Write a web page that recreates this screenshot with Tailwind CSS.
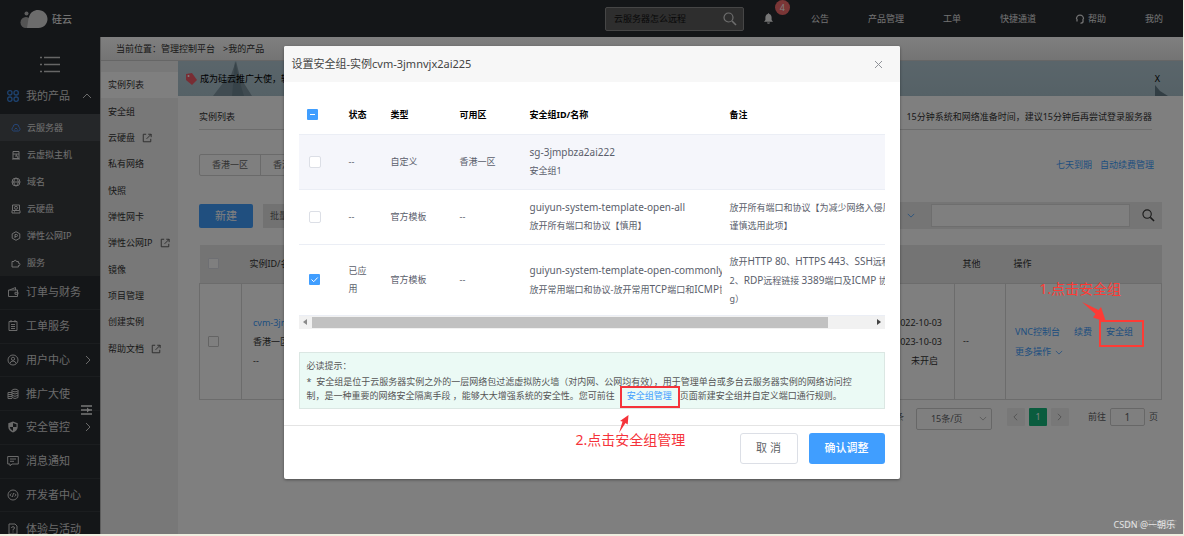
<!DOCTYPE html>
<html lang="zh-CN">
<head>
<meta charset="utf-8">
<title>硅云 - 我的产品</title>
<script src="https://cdn.jsdelivr.net/npm/@tailwindcss/browser@4"></script>
</head>
<body class="h-screen overflow-hidden bg-[#eeeee0] pr-px pb-[2px] font-['Noto_Sans','Noto_Sans_CJK_SC',sans-serif] text-[9px] leading-[18px] text-[#333]">
<svg class="hidden">
  <symbol id="ext" viewBox="0 0 12 12"><path d="M5 1.500H1.500v9h9V7M7.500 1.500h3.500v3.500M11 1.500L5.500 7" fill="none" stroke="currentColor" stroke-width="1.100"/></symbol>
  <symbol id="right" viewBox="0 0 6 10"><path d="M1 1l4 4-4 4" fill="none" stroke="currentColor"/></symbol>
  <symbol id="down" viewBox="0 0 10 6"><path d="M1 1l4 4 4-4" fill="none" stroke="currentColor"/></symbol>
  <symbol id="search" viewBox="0 0 14 14"><circle cx="5.500" cy="5.500" r="4.500" fill="none" stroke="currentColor" stroke-width="1.200"/><path d="M9 9l4 4" stroke="currentColor" stroke-width="1.600"/></symbol>
</svg>
<div class="relative flex h-full flex-col overflow-hidden bg-white">
  <header class="flex h-[37px] shrink-0 items-center bg-[#292c31] text-[#e4e4e4]">
    <a href="#" class="ml-5 flex items-center gap-1 text-[10px] font-medium">
      <svg class="h-5 w-7" viewBox="0 0 28 20"><circle cx="6" cy="13.500" r="5.500" fill="#a9a9a9"/><circle cx="6.500" cy="4.500" r="2" fill="#bbb"/><path d="M7 19c1-5 1-8 2-11C10.500 3 14 1 18 1c5.500 0 9.500 4 9.500 9s-4 9-9 9z" fill="#d9d9d9"/></svg>
      硅云
    </a>
    <form class="ml-auto flex h-6 w-[139px] items-center rounded-[2px] border border-[#8c8c8c] bg-[#5c5c5c] pr-[6px] pl-2">
      <input aria-label="搜索" value="云服务器怎么远程" class="w-full min-w-0 text-[9px] text-[#111] outline-none">
      <button type="button" aria-label="搜索"><svg class="size-[14px] text-[#ddd]"><use href="#search"/></svg></button>
    </form>
    <button class="relative ml-5" aria-label="通知">
      <svg class="h-[11px] w-[9px]" viewBox="0 0 9 11"><path d="M4.500 0l.8 1C7 1.500 7.600 3 7.600 4.500V7L9 8.800H0L1.400 7V4.500C1.400 3 2 1.500 3.700 1zM3 9.400h3a1.500 1.300 0 01-3 0z" fill="#eee"/></svg>
      <span class="absolute -top-[13px] left-[11px] size-[15px] rounded-full bg-[#f56c6c] text-center text-[9px] leading-[15px] text-white">4</span>
    </button>
    <nav class="mr-5 ml-[38px] flex gap-[39px]">
      <a href="#">公告</a><a href="#">产品管理</a><a href="#">工单</a><a href="#">快捷通道</a>
      <a href="#" class="flex items-center gap-[3px]"><svg class="size-[10px]" viewBox="0 0 10 10"><path d="M2 7.500V5M8 7.500V5M1.500 5a3.500 3.800 0 017 0M8.300 7.500Q8 9 5.500 9.300" fill="none" stroke="currentColor" stroke-width="1.300"/></svg>帮助</a>
      <a href="#">我的</a>
    </nav>
  </header>

  <div class="flex min-h-0 flex-1">
    <aside class="relative w-[100px] shrink-0 overflow-hidden bg-[#292c31] text-[11px] text-[#d4d4d4]">
      <button class="mx-auto mt-[19px] block h-[17px] w-5" aria-label="折叠菜单"><svg viewBox="0 0 20 17"><path d="M4 1.500h16M4 8.500h16M4 15.500h16M0 1.500h2M0 8.500h2M0 15.500h2" stroke="#ccc" stroke-width="1.400"/></svg></button>
      <a href="#" class="mt-1 flex h-[37px] items-center pr-2 pl-[7px]">
        <svg class="mr-[7px] size-3" viewBox="0 0 12 12" fill="none" stroke="#3a86e0" stroke-width="1.300"><rect x=".7" y=".7" width="4.300" height="4.300" rx="2"/><rect x="7" y=".7" width="4.300" height="4.300" rx="2"/><rect x=".7" y="7" width="4.300" height="4.300" rx="2"/><rect x="7" y="7" width="4.300" height="4.300" rx="2"/></svg>
        我的产品
        <svg class="ml-auto h-[6px] w-[10px] rotate-180"><use href="#down"/></svg>
      </a>
      <nav class="bg-[#393c3f] text-[9px] text-[#e0e0e0] *:flex *:h-[27px] *:items-center *:gap-[6px] *:pl-[11px]">
        <a href="#" class="bg-[#4b4e52]"><svg class="size-[10px] text-[#4a8cf0]" viewBox="0 0 10 10" fill="none" stroke="currentColor"><path d="M2.500 8A2 2 0 012 4.300a3 3 0 016 0A2 2 0 017.500 8zM3.500 6.500L5 5l1.500 1.500"/></svg>云服务器</a>
        <a href="#"><svg class="size-[10px]" viewBox="0 0 10 10" fill="none" stroke="currentColor"><path d="M2 1.500h6v2.500H2zM2 4v4.500h6V4M4 6h2M1 9h8M5 4l2 4"/></svg>云虚拟主机</a>
        <a href="#"><svg class="size-[10px]" viewBox="0 0 10 10" fill="none" stroke="currentColor"><circle cx="5" cy="5" r="4"/><path d="M1 5h8M5 1c-3 3-3 5 0 8 3-3 3-5 0-8"/></svg>域名</a>
        <a href="#"><svg class="size-[10px]" viewBox="0 0 10 10" fill="none" stroke="currentColor"><path d="M1.500 1h7v5.500h-7zM1 6.500v2.500h8V6.500M3 7.800h1"/><circle cx="5" cy="3.800" r="1.500"/></svg>云硬盘</a>
        <a href="#"><svg class="size-[10px]" viewBox="0 0 10 10" fill="none" stroke="currentColor"><path d="M5 .7l3.800 2.100v4.400L5 9.300 1.200 7.200V2.800zM4 7V3.500h1.500a1 1 0 010 2H4"/></svg>弹性公网IP</a>
        <a href="#"><svg class="size-[10px]" viewBox="0 0 10 10" fill="none" stroke="currentColor"><path d="M1 3.500h2a1.200 1.200 0 112.400 0h2v1.700a1.200 1.200 0 110 2.300V9H1z"/></svg>服务</a>
      </nav>
      <nav class="grid h-[270px] grid-rows-8 *:flex *:items-center *:gap-[7px] *:border-b *:border-[#363a3e] *:pr-[9px] *:pl-[7px]">
        <a href="#"><svg class="size-[12px]" viewBox="0 0 12 12" fill="none" stroke="currentColor"><path d="M2.500 4L8.500 1.500V4M1.500 4h9v6.500h-9zM8 6.300h3v2H8z"/></svg>订单与财务</a>
        <a href="#"><svg class="size-[12px]" viewBox="0 0 12 12" fill="none" stroke="currentColor"><path d="M2 1.500h8v9H2zM4 0v2.500M8 0v2.500M4 4.500h4M4 6.500h4M4 8.500h4"/></svg>工单服务</a>
        <a href="#"><svg class="size-[12px]" viewBox="0 0 12 12" fill="none" stroke="currentColor"><circle cx="6" cy="6" r="5"/><circle cx="6" cy="4.800" r="1.600"/><path d="M3 9.500Q3.500 7 6 7t3 2.500"/></svg>用户中心<svg class="ml-auto h-[10px] w-[6px]"><use href="#right"/></svg></a>
        <a href="#"><svg class="size-[12px]" viewBox="0 0 12 12" fill="none" stroke="currentColor"><ellipse cx="8" cy="2.500" rx="3" ry="1.300"/><path d="M5 2.500v7q3 2 6 0v-7M5 5q3 2 6 0M5 7.300q3 2 6 0M5 4.500H1v6h4M1 6.500h4M1 8.500h4"/></svg>推广大使</a>
        <a href="#"><svg class="size-[12px]" viewBox="0 0 12 12"><path d="M6 .5l4.700 1.700V6Q10.500 9.500 6 11.500 1.500 9.500 1.300 6V2.200z" fill="currentColor"/><path d="M6 2v4h3.500V3.200zM6 6H2.700Q3 8.500 6 10z" fill="#292c31"/></svg>安全管控<svg class="ml-auto h-[10px] w-[6px]"><use href="#right"/></svg></a>
        <a href="#"><svg class="size-[12px]" viewBox="0 0 12 12" fill="none" stroke="currentColor"><path d="M.7 1.500h10.600v7.500H5L3 10.800V9H.7zM3 4h6M3 6.300h4"/></svg>消息通知</a>
        <a href="#"><svg class="size-[12px]" viewBox="0 0 12 12" fill="none" stroke="currentColor"><circle cx="6" cy="6" r="5"/><path d="M4.300 4.500L2.800 6l1.500 1.500M7.700 4.500L9.200 6 7.700 7.500M6.600 4L5.400 8"/></svg>开发者中心</a>
        <a href="#"><svg class="size-[12px]" viewBox="0 0 12 12" fill="none" stroke="currentColor"><path d="M2 1h6l2 2v8H2zM4.500 5q0-1.300 1.500-1.300T7.500 5Q7.500 6 6 6.500v1M6 8.500v1"/></svg>体验与活动</a>
      </nav>
      <svg class="absolute top-[368px] left-[81px] h-[10px] w-[11px]" viewBox="0 0 11 10"><path d="M0 1h11M0 5h11M0 9h11" stroke="#eee" stroke-width="1.400"/><path d="M6 2.500l3 2.500-3 2.500z" fill="#eee"/></svg>
    </aside>

    <div class="flex min-w-0 flex-1 flex-col border-l border-[#bbb]">
      <div class="flex h-6 shrink-0 items-center gap-2 border-b border-[#ccc] bg-gradient-to-b from-white to-[#e8e8e8] pl-[15px]"><span>当前位置：管理控制平台</span><span>&gt;我的产品</span></div>
      <div class="flex min-h-0 flex-1">
        <nav class="w-[77px] shrink-0 bg-[#f0f0f0] pt-[11px]">
          <div class="grid h-[290px] grid-rows-11 *:flex *:items-center *:gap-[7px] *:pl-[7px]">
            <a href="#" class="bg-white">实例列表</a>
            <a href="#">安全组</a>
            <a href="#">云硬盘<svg class="size-[10px] text-[#555]"><use href="#ext"/></svg></a>
            <a href="#">私有网络</a>
            <a href="#">快照</a>
            <a href="#">弹性网卡</a>
            <a href="#">弹性公网IP<svg class="size-[10px] text-[#555]"><use href="#ext"/></svg></a>
            <a href="#">镜像</a>
            <a href="#">项目管理</a>
            <a href="#">创建实例</a>
            <a href="#">帮助文档<svg class="size-[10px] text-[#555]"><use href="#ext"/></svg></a>
          </div>
        </nav>
        <main class="min-w-0 flex-1">
          <div class="relative flex h-[35px] items-center bg-gradient-to-b from-[#b5cbd6] to-[#abc3cd] pr-[23px] pl-[7px] text-black">
            <svg class="absolute inset-y-0 left-[34px] h-full w-[40px]" viewBox="0 0 40 35"><path d="M1 35L11 22l8-8L24 0l4 16 12 19z" fill="#8197a2"/><path d="M23 0l4 18 5 17H20z" fill="#6f8792"/></svg>
            <svg class="absolute right-[15px] bottom-0 h-[11px] w-[13px]" viewBox="0 0 13 11"><path d="M0 11V0l5 6 8 5z" fill="#647c88"/></svg>
            <svg class="relative mr-[3px] size-3" viewBox="0 0 12 12"><path d="M1 1l6-1 5 7-5 5-6-5z" fill="#f05a68"/><circle cx="3.500" cy="3" r="1" fill="#fff"/></svg>
            <span class="relative">成为硅云推广大使，轻松获取收益</span>
            <button class="relative ml-auto">X</button>
          </div>
          <div class="px-[21px]">
            <div class="mr-[10px] flex h-[34px] items-end justify-between border-b border-[#d8d8d8] pb-[3px]"><h1>实例列表</h1><span>15分钟系统和网络准备时间，建议15分钟后再尝试登录服务器</span></div>
            <div class="mt-6 flex items-center justify-between">
              <div class="flex h-[22px] rounded-[2px] border border-[#d4d4d4] text-[#666]"><button class="border-r border-[#d4d4d4] px-3">香港一区</button><button class="px-3">香港二区</button></div>
              <div class="mr-2 flex gap-2 text-[#409eff]"><a href="#">七天到期</a><a href="#">自动续费管理</a></div>
            </div>
            <div class="mt-[26px] flex h-[27px] items-center gap-[10px]">
              <button class="h-6 w-[54px] rounded-[2px] bg-[#409eff] text-[11px] text-white">新建</button>
              <button class="h-6 bg-[#e4e4e4] px-[7px] text-[#666]">批量操作</button>
              <div class="ml-auto flex h-full w-[400px] items-center justify-end bg-[#eaeaea] pr-[7px]">
                <svg class="mr-4 h-[5px] w-2 text-[#409eff]" viewBox="0 0 10 6"><use href="#down"/></svg>
                <input aria-label="搜索实例" class="mr-3 h-[23px] w-[199px] border border-[#dcdcdc] bg-white">
                <button aria-label="查询"><svg class="size-[13px]" viewBox="0 0 14 14"><use href="#search"/></svg></button>
              </div>
            </div>
            <table class="mt-4 w-full table-fixed border-collapse text-left">
              <colgroup><col class="w-[42px]"><col><col class="w-[220px]"><col class="w-[51px]"><col class="w-[156px]"></colgroup>
              <thead class="bg-[#e8e8e8]"><tr class="h-[38px] *:p-0 *:font-normal">
                <th><input type="checkbox" aria-label="全选实例" class="ml-2 block size-[11px] appearance-none rounded-[1px] border border-[#dcdfe6] bg-white"></th>
                <th><span class="pl-2">实例ID/名称</span></th><th></th><th><span class="pl-2">其他</span></th><th><span class="pl-2">操作</span></th>
              </tr></thead>
              <tbody><tr class="h-[116px] *:border *:border-[#d8d8d8] *:p-0">
                <td><input type="checkbox" aria-label="选择实例" class="ml-2 block size-[11px] appearance-none rounded-[1px] border border-[#c8c8c8] bg-white"></td>
                <td><div class="pl-[11px] leading-[19px]"><a href="#" class="text-[#409eff]">cvm-3jmnvjx2ai225</a><br>香港一区<br>--</div></td>
                <td><div class="pr-3 text-right leading-[19px]">2022-10-03<br>2023-10-03<br><span class="pr-1">未开启</span></div></td>
                <td><div class="pl-2">--</div></td>
                <td><div class="pt-[2px] pl-[9px] leading-5 text-[#409eff]"><div class="flex gap-[14px]"><a href="#">VNC控制台</a><a href="#">续费</a><a href="#">安全组</a></div><button class="flex items-center gap-1">更多操作<svg class="h-[5px] w-2" viewBox="0 0 10 6"><use href="#down"/></svg></button></div></td>
              </tr></tbody>
            </table>
            <div class="mt-2 mr-1 flex items-start justify-end leading-[18px] text-[#606266]">
              <span class="mr-3">共 1 条</span>
              <div class="relative mr-[15px]">
                <select aria-label="每页条数" class="h-[22px] w-[76px] appearance-none rounded-[2px] border border-[#cfcfcf] bg-white pl-[14px] text-[9px]"><option>15条/页</option></select>
                <svg class="absolute top-2 right-[5px] h-[5px] w-2 text-[#aaa]" viewBox="0 0 10 6"><use href="#down"/></svg>
              </div>
              <div class="mr-[19px] flex gap-1 *:flex *:size-[18px] *:items-center *:justify-center *:rounded-[1px]">
                <button aria-label="上一页" class="bg-[#f0f0f0]"><svg class="h-2 w-[5px] rotate-180 text-[#999]" viewBox="0 0 6 10"><use href="#right"/></svg></button>
                <button class="bg-[#14b87c] text-white">1</button>
                <button aria-label="下一页" class="bg-[#f0f0f0]"><svg class="h-2 w-[5px] text-[#999]" viewBox="0 0 6 10"><use href="#right"/></svg></button>
              </div>
              <label class="flex gap-1">前往 <input value="1" class="h-[18px] w-[35px] rounded-[2px] border border-[#cfcfcf] bg-white text-center text-[10px]"> 页</label>
            </div>
          </div>
        </main>
      </div>
    </div>
  </div>

  <div class="absolute inset-0 flex items-start justify-center bg-black/50 pt-[46px]">
    <section role="dialog" aria-labelledby="dlg" class="relative w-[616px] rounded-[2px] bg-white text-[#5a5e6b] shadow-[0_1px_3px_#0006]">
      <div class="flex h-9 items-center justify-between rounded-t-[2px] bg-[#f7f7f7] pr-[17px] pl-2">
        <h2 id="dlg" class="text-[11px] text-[#444]">设置安全组-实例cvm-3jmnvjx2ai225</h2>
        <button aria-label="关闭"><svg class="size-[9px]" viewBox="0 0 9 9"><path d="M1 1l7 7M8 1L1 8" stroke="#909399"/></svg></button>
      </div>
      <div class="px-[15px] pt-[14px]">
        <table class="w-full table-fixed border-collapse text-left whitespace-nowrap">
          <colgroup><col class="w-[42px]"><col class="w-[42px]"><col class="w-[69px]"><col class="w-[70px]"><col class="w-[200px]"><col></colgroup>
          <thead><tr class="h-[38px] border-b border-[#ebeef5] text-black *:p-0 *:pl-2">
            <th><span class="grid size-[11px] place-items-center *:[grid-area:1/1]"><input type="checkbox" aria-label="全选" class="size-[11px] appearance-none rounded-[1px] bg-[#409eff]"><svg class="pointer-events-none size-[11px]" viewBox="0 0 11 11"><path d="M3 5.500h5" stroke="#fff"/></svg></span></th>
            <th>状态</th><th>类型</th><th>可用区</th><th>安全组ID/名称</th><th>备注</th>
          </tr></thead>
          <tbody class="*:border-b *:border-[#ebeef5]">
            <tr class="h-[55px] bg-[#f5f6fb] *:overflow-hidden *:p-0 *:pl-2">
              <td><input type="checkbox" aria-label="选择 安全组1" class="ml-[2px] block size-[12px] appearance-none rounded-[2px] border border-[#dcdfe6] bg-white"></td>
              <td>--</td><td>自定义</td><td>香港一区</td><td><span class="text-[10px]">sg-3jmpbza2ai222</span><br>安全组1</td><td></td>
            </tr>
            <tr class="h-[55px] *:overflow-hidden *:p-0 *:pl-2">
              <td><input type="checkbox" aria-label="选择 开放所有端口" class="ml-[2px] block size-[12px] appearance-none rounded-[2px] border border-[#dcdfe6] bg-white"></td>
              <td>--</td><td>官方模板</td><td>--</td><td><span class="text-[10px]">guiyun-system-template-open-all</span><br>放开所有端口和协议【慎用】</td><td>放开所有端口和协议【为减少网络入侵风险<br>谨慎选用此项】</td>
            </tr>
            <tr class="h-[71px] *:overflow-hidden *:p-0 *:pl-2">
              <td><span class="ml-[2px] grid size-[11px] place-items-center *:[grid-area:1/1]"><input type="checkbox" checked aria-label="选择 常用端口" class="size-[11px] appearance-none rounded-[1px] bg-[#409eff]"><svg class="pointer-events-none size-[11px]" viewBox="0 0 11 11"><path d="M2.500 5.500l2.200 2.200 4-4.200" fill="none" stroke="#fff"/></svg></span></td>
              <td>已应<br>用</td><td>官方模板</td><td>--</td><td><span class="text-[10px]">guiyun-system-template-open-commonly-used</span><br>放开常用端口和协议-放开常用<span class="text-[10px]">TCP</span>端口和<span class="text-[10px]">ICMP</span>协议</td><td>放开<span class="text-[10px]">HTTP 80</span>、<span class="text-[10px]">HTTPS 443</span>、<span class="text-[10px]">SSH</span>远程链接<br>2、<span class="text-[10px]">RDP</span>远程链接 <span class="text-[10px]">3389</span>端口及<span class="text-[10px]">ICMP</span> 协议<br>g）</td>
            </tr>
          </tbody>
        </table>
        <div role="scrollbar" aria-controls="dlg" aria-valuenow="0" class="flex h-[13px] items-center justify-between bg-[#f1f1f1] px-1">
          <svg class="mr-[5px] h-[6px] w-[4px]" viewBox="0 0 4 6"><path d="M4 0v6L0 3z" fill="#8a8a8a"/></svg>
          <div class="mr-auto h-[11px] w-[516px] bg-[#c1c1c1]"></div>
          <svg class="h-[6px] w-[4px]" viewBox="0 0 4 6"><path d="M0 0v6l4-3z" fill="#444"/></svg>
        </div>
        <div class="mt-[23px] border border-[#dbe7e3] bg-[#ebfaf5] px-[7px] pt-[4px] pb-[5px] leading-[14px] whitespace-nowrap text-[#555]">
          <p class="leading-[18px]">必读提示：</p>
          <p>*&nbsp; 安全组是位于云服务器实例之外的一层网络包过滤虚拟防火墙（对内网、公网均有效），用于管理单台或多台云服务器实例的网络访问控</p>
          <p>制，是一种重要的网络安全隔离手段 ，能够大大增强系统的安全性。您可前往<a href="#" class="mr-2 ml-3 text-[#409eff]">安全组管理</a>页面新建安全组并自定义端口通行规则。</p>
        </div>
      </div>
      <footer class="mt-4 flex justify-end gap-[11px] border-t border-[#e4e4e4] px-[15px] pt-[7px] pb-[15px] text-[11px]">
        <button class="h-[31px] w-[58px] rounded-[3px] border border-[#dcdfe6] bg-white text-[#606266]">取 消</button>
        <button class="h-[31px] w-[76px] rounded-[3px] bg-[#409eff] font-medium text-white">确认调整</button>
      </footer>
      <div class="absolute top-[340px] left-[336px] h-[22px] w-[60px] border-2 border-[#f5333a]"></div>
      <svg class="absolute top-[369px] left-[334px] h-[18px] w-3" viewBox="0 0 12 18"><path d="M10.500 0L9.700 9.500 7.500 8 1 18 4.500 6.500 2 6z" fill="#f5333a"/></svg>
      <p class="absolute top-[385px] left-[292px] text-[14px] whitespace-nowrap text-[#f5333a]">2.点击安全组管理</p>
    </section>
  </div>

  <p class="absolute top-[280px] right-[62px] text-[14px] text-[#fe3b35]">1.点击安全组</p>
  <svg class="absolute top-[302px] right-[77px] h-5 w-6" viewBox="0 0 24 20"><path d="M0 0l16.500 8 2.500-3 5 15-13-4.500 2.500-3.500z" fill="#fe3b35"/></svg>
  <div class="absolute top-[320px] right-[39px] h-[27px] w-[45px] border-2 border-[#fe3b35]"></div>
  <p class="absolute right-[6px] bottom-[1px] text-white/20">@51CTO博客</p>
  <p class="absolute right-[8px] bottom-0 text-white/80">CSDN @一朝乐</p>
</div>
</body>
</html>
